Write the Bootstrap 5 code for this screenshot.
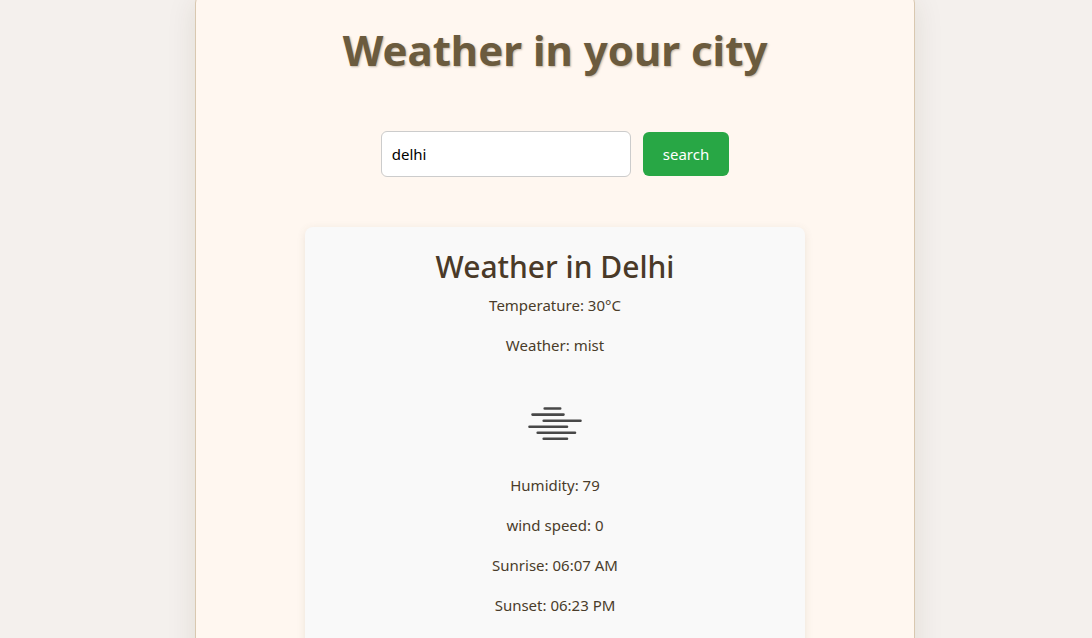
<!DOCTYPE html>
<html lang="en">
<head>
<meta charset="utf-8">
<meta name="viewport" content="width=device-width, initial-scale=1">
<title>Weather in your city</title>
<link href="https://cdn.jsdelivr.net/npm/bootstrap@5.3.0/dist/css/bootstrap.min.css" rel="stylesheet">
<style>
body { background: #f4f0ed; color: #4a3c2a; font-family: "Segoe UI", "Noto Sans", "Open Sans", sans-serif; font-size: 15px; line-height: 24px; }
.page { padding-left: 18px; }
.panel { width: 100%; max-width: 720px; margin-top: -9px; padding: 24px 32px; background: #fff7f0; border: 1px solid #d9c8b0; border-radius: 12px; box-shadow: 0 8px 30px rgba(60, 50, 20, .1); }
.title { font-size: 42px; line-height: 68px; font-weight: 700; color: #6b5b3e; text-shadow: 1px 1px 2px rgba(107, 91, 62, .4); margin-bottom: 47px; }
.search-form { gap: 12px; }
.city { width: 250px; height: 46px; padding: 10px; border: 1px solid #ccc; border-radius: 6px; color: #000; font-size: 15px; }
.go { height: 44px; padding: 10px 20px; border: 0; border-radius: 6px; background: #28a745; color: #fff; font-size: 15px; }
.go:hover { background: #218838; color: #fff; }
.result { width: 100%; max-width: 500px; margin-top: 50px; padding: 21px 20px; background: #f9f9f9; border-radius: 8px; box-shadow: 0 2px 8px rgba(107, 91, 62, .12); }
.result h2 { font-size: 30px; line-height: 38px; font-weight: 500; color: #4a3a28; margin-bottom: 7px; }
</style>
</head>
<body>
<div class="page vh-100 overflow-hidden d-flex justify-content-center align-items-start">
  <main class="panel text-center">
    <h1 class="title">Weather in your city</h1>
    <form class="search-form d-flex flex-wrap justify-content-center align-items-center" onsubmit="return false">
      <input class="form-control city" id="city" type="text" value="delhi" aria-label="City">
      <button class="btn go" type="submit">search</button>
    </form>
    <section class="result mx-auto">
      <h2>Weather in Delhi</h2>
      <p>Temperature: 30°C</p>
      <p class="mb-3">Weather: mist</p>
      <svg class="d-block mx-auto" width="100" height="100" viewBox="0 0 100 100" role="img" aria-label="Mist">
        <g stroke="#484848" stroke-width="2.6" stroke-linecap="round">
          <path d="M39.7 35.5H55.2M27.5 41.6H58.5M38.7 47.8H75.5M24.5 53.8H62M32.7 59.8H70M38.7 65.7H62"/>
        </g>
      </svg>
      <p>Humidity: 79</p>
      <p>wind speed: 0</p>
      <p>Sunrise: 06:07 AM</p>
      <p>Sunset: 06:23 PM</p>
    </section>
  </main>
</div>
<script src="https://cdn.jsdelivr.net/npm/bootstrap@5.3.0/dist/js/bootstrap.bundle.min.js"></script>
</body>
</html>
